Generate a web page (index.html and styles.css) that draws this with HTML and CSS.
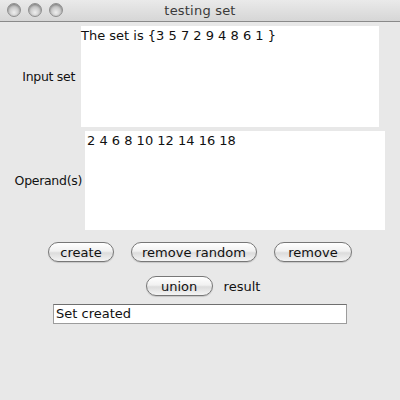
FILE: index.html
```html
<!DOCTYPE html>
<html lang="en">
<head>
  <meta charset="UTF-8" />
  <title>testing set</title>
  <link rel="stylesheet" href="styles.css">
</head>
<body>
  <div class="window">
    <div class="titlebar">
      <div class="lights">
        <span class="light"></span>
        <span class="light"></span>
        <span class="light"></span>
      </div>
      <div class="title">testing set</div>
    </div>

    <div class="content">
      <div class="field-row input-row">
        <label class="field-label">Input set</label>
        <div class="area">The set is {3 5 7 2 9 4 8 6 1 }</div>
      </div>

      <div class="field-row operand-row">
        <label class="field-label">Operand(s)</label>
        <div class="area">2 4 6 8 10 12 14 16 18</div>
      </div>

      <div class="button-row">
        <button class="btn btn-create">create</button>
        <button class="btn btn-random">remove random</button>
        <button class="btn btn-remove">remove</button>
      </div>

      <div class="button-row union-row">
        <button class="btn btn-union">union</button>
        <span class="result-label">result</span>
      </div>

      <div class="status-row">
        <div class="status">Set created</div>
      </div>
    </div>
  </div>
</body>
</html>
```

FILE: styles.css
```css
* {
  box-sizing: border-box;
  margin: 0;
  padding: 0;
}

body {
  font-family: 'DejaVu Sans', 'Lucida Grande', sans-serif;
  font-size: 13px;
  background: #e8e8e8;
  color: #000;
  width: 400px;
  height: 400px;
  overflow: hidden;
}

.titlebar {
  position: relative;
  height: 22px;
  background: linear-gradient(#eaeaea, #d6d6d6);
  border-bottom: 1px solid #8a8a8a;
  display: flex;
  align-items: center;
  justify-content: center;
}

.lights {
  position: absolute;
  left: 7px;
  top: 3px;
  display: flex;
  gap: 7px;
}

.light {
  width: 14px;
  height: 14px;
  border-radius: 50%;
  border: 1px solid #8e8e8e;
  background: radial-gradient(circle at 50% 70%, #eeeeee, #c0c0c0 60%, #a2a2a2);
  box-shadow: inset 0 1px 2px rgba(0, 0, 0, 0.3);
}

.title {
  color: #3a3a3a;
  font-size: 13px;
  letter-spacing: 0.2px;
}

.content {
  display: flex;
  flex-direction: column;
  padding-top: 4px;
}

.field-row {
  display: flex;
  align-items: center;
}

.field-label {
  font-size: 12.5px;
  letter-spacing: -0.3px;
  text-align: right;
  color: #111;
}

.input-row .field-label {
  width: 81px;
  padding-right: 6px;
}

.input-row .area {
  width: 298px;
  height: 101px;
  padding: 1px 0 0 0;
}

.operand-row {
  margin-top: 4px;
}

.operand-row .field-label {
  width: 85px;
  padding-right: 3px;
}

.operand-row .area {
  width: 300px;
  height: 99px;
  padding: 1px 0 0 2px;
}

.area {
  background: #fff;
  align-self: flex-start;
  font-size: 13px;
  line-height: 17px;
  color: #111;
}

.button-row {
  display: flex;
  justify-content: center;
  align-items: center;
  gap: 17px;
  margin-top: 12px;
}

.btn {
  font-family: inherit;
  font-size: 13px;
  height: 20px;
  border: 1px solid #777;
  border-radius: 10px;
  background: linear-gradient(#ffffff, #f1f1f1 45%, #dcdcdc 55%, #f4f4f4);
  box-shadow: 0 1px 1px rgba(0, 0, 0, 0.15);
  color: #111;
}

.btn-create {
  width: 66px;
}

.btn-random {
  width: 126px;
}

.btn-remove {
  width: 78px;
}

.union-row {
  margin-top: 14px;
  gap: 11px;
  padding-left: 6px;
}

.btn-union {
  width: 67px;
}

.result-label {
  font-size: 13px;
  color: #111;
}

.status-row {
  display: flex;
  justify-content: center;
  margin-top: 8px;
}

.status {
  width: 294px;
  height: 20px;
  background: #fff;
  border: 1px solid #9c9c9c;
  border-top-color: #6f6f6f;
  padding-left: 2px;
  font-size: 13px;
  line-height: 18px;
  color: #111;
}
```
